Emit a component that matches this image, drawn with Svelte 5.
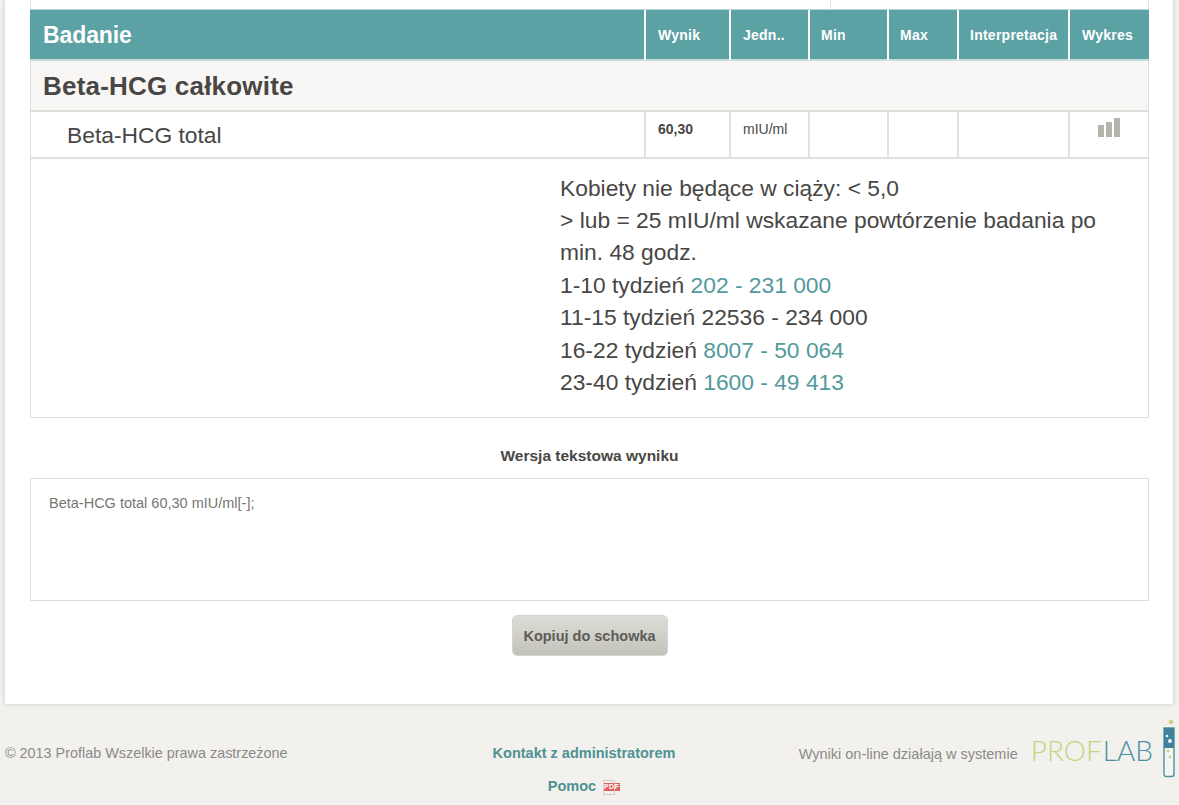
<script>
  const columns = [
    { label: 'Wynik', value: '60,30', bold: true },
    { label: 'Jedn..', value: 'mIU/ml' },
    { label: 'Min', value: '' },
    { label: 'Max', value: '' },
    { label: 'Interpretacja', value: '' }
  ];

  const noteLines = [
    [{ text: 'Kobiety nie będące w ciąży: < 5,0' }],
    [{ text: '> lub = 25 mIU/ml wskazane powtórzenie badania po' }],
    [{ text: 'min. 48 godz.' }],
    [{ text: '1-10 tydzień ' }, { text: '202 - 231 000', link: true }],
    [{ text: '11-15 tydzień 22536 - 234 000' }],
    [{ text: '16-22 tydzień ' }, { text: '8007 - 50 064', link: true }],
    [{ text: '23-40 tydzień ' }, { text: '1600 - 49 413', link: true }]
  ];
</script>

<div class="page">
  <main class="card">
    <div class="stub"><span></span></div>

    <div class="results">
      <div class="row head">
        <div class="cell name">Badanie</div>
        {#each columns as col}
          <div class="cell">{col.label}</div>
        {/each}
        <div class="cell">Wykres</div>
      </div>

      <div class="group">Beta-HCG całkowite</div>

      <div class="row item">
        <div class="cell name">Beta-HCG total</div>
        {#each columns as col}
          <div class="cell" class:bold={col.bold}>{col.value}</div>
        {/each}
        <div class="cell chart">
          <svg width="23" height="20" viewBox="0 0 23 20" aria-hidden="true">
            <rect x="0" y="7" width="6" height="12" fill="#b5b4ab" />
            <rect x="8" y="4" width="6" height="15" fill="#b5b4ab" />
            <rect x="16" y="0" width="6" height="19" fill="#b5b4ab" />
          </svg>
        </div>
      </div>

      <div class="note">
        <div class="note-text">
          {#each noteLines as line}
            <div>
              {#each line as part}
                {#if part.link}<span class="teal">{part.text}</span>{:else}{part.text}{/if}
              {/each}
            </div>
          {/each}
        </div>
      </div>
    </div>

    <h3 class="text-title">Wersja tekstowa wyniku</h3>
    <div class="text-box">Beta-HCG total 60,30 mIU/ml[-];</div>
    <div class="actions">
      <button type="button" class="copy">Kopiuj do schowka</button>
    </div>
  </main>

  <footer class="footer">
    <div class="copyright">© 2013 Proflab Wszelkie prawa zastrzeżone</div>
    <div class="links">
      <a href="#kontakt">Kontakt z administratorem</a>
      <a href="#pomoc" class="help">Pomoc <span class="pdf">PDF</span></a>
    </div>
    <div class="brand">
      <span class="system">Wyniki on-line działają w systemie</span>
      <span class="logo"><span class="prof">PROF</span><span class="lab">LAB</span></span>
      <svg class="tube" width="14" height="62" viewBox="0 0 14 62" aria-hidden="true">
        <circle cx="9" cy="5" r="2.2" fill="#c5d67f" />
        <path d="M2 11 H12 V57 Q12 59.5 9.5 59.5 H4.5 Q2 59.5 2 57 Z" fill="#f5f6f2" stroke="#4d8fa0" stroke-width="1.4" />
        <path d="M2 11 H12 V31 H2 Z" fill="#3f829b" />
        <circle cx="5" cy="19" r="1.3" fill="#fff" />
        <circle cx="8" cy="24" r="1.9" fill="#fff" />
        <circle cx="6" cy="34" r="1.6" fill="#c5d67f" />
        <circle cx="8" cy="40" r="1.4" fill="#c5d67f" />
        <circle cx="6" cy="46" r="1" fill="#dbe4a6" />
      </svg>
    </div>
  </footer>
</div>

<style>
  :global(body) {
    background: #f2f1ee;
    font-family: "Liberation Sans", Arial, sans-serif;
    color: #484745;
  }

  .page {
    height: 805px;
    overflow: hidden;
  }

  .card {
    margin: 0 5px 0 5px;
    width: 1168px;
    height: 704px;
    box-sizing: border-box;
    padding: 0 24px 0 25px;
    background: #fff;
    box-shadow: 0 0 4px rgba(120, 118, 110, 0.35);
  }

  .stub {
    height: 9px;
    border: solid #e3e2de;
    border-width: 0 1px;
  }

  .stub span {
    display: block;
    height: 9px;
    width: 318px;
    margin-left: 799px;
    border-left: 1px solid #e3e2de;
  }

  .row {
    display: grid;
    grid-template-columns: 614px 85px 79px 79px 70px 111px 1fr;
  }

  .cell {
    border-left: 2px solid #e2e1dd;
    box-sizing: border-box;
    padding-left: 12px;
  }

  .cell:first-child {
    border-left: 1px solid #dfdeda;
  }

  .head {
    height: 52px;
    background: #5ca2a5;
    color: #fff;
    font-size: 14px;
    font-weight: bold;
    letter-spacing: 0.25px;
    line-height: 50px;
    border-top: 1px solid #b9d8d9;
    border-bottom: 2px solid #c4dcdc;
    box-sizing: border-box;
  }

  .head .cell {
    border-left-color: #fff;
  }

  .head .cell:nth-child(n + 4):nth-child(-n + 6) {
    padding-left: 11px;
  }

  .head .name {
    font-size: 23px;
    letter-spacing: -0.1px;
    padding-left: 13px;
    border-left: 0;
  }

  .group {
    height: 51px;
    box-sizing: border-box;
    background: #f8f7f5;
    border: solid #dfdeda;
    border-width: 0 1px 2px;
    font-size: 26px;
    letter-spacing: 0.2px;
    font-weight: bold;
    line-height: 51px;
    padding-left: 12px;
  }

  .item {
    height: 47px;
    box-sizing: border-box;
    border-right: 1px solid #dfdeda;
    border-bottom: 2px solid #e2e1dd;
    font-size: 14px;
    line-height: 34px;
  }

  .item .name {
    font-size: 22.8px;
    line-height: 47px;
    padding-left: 36px;
  }

  .bold {
    font-weight: bold;
  }

  .chart {
    padding: 6px 0 0 28px;
    line-height: 0;
  }

  .note {
    height: 259px;
    box-sizing: border-box;
    border: solid #dfdeda;
    border-width: 0 1px 1px;
    padding: 12.6px 0 0 529px;
    font-size: 22.8px;
    line-height: 32.4px;
  }

  .teal {
    color: #529a9b;
  }

  .text-title {
    margin: 29px 0 0;
    text-align: center;
    font-size: 15.5px;
    line-height: 18px;
    font-weight: bold;
  }

  .text-box {
    margin-top: 13px;
    height: 123px;
    box-sizing: border-box;
    border: 1px solid #dfdeda;
    padding: 16px 18px;
    font-size: 14.5px;
    line-height: 16px;
    color: #777672;
  }

  .actions {
    display: flex;
    justify-content: center;
    margin-top: 14px;
  }

  .copy {
    width: 156px;
    height: 41px;
    border: 1px solid #d5d4ce;
    border-radius: 5px;
    background: linear-gradient(#dddcd6, #c3c2ba);
    color: #5d5c56;
    font: bold 14.5px "Liberation Sans", Arial, sans-serif;
  }

  .footer {
    position: relative;
    height: 101px;
  }

  .copyright {
    position: absolute;
    left: 5px;
    top: 40px;
    font-size: 14.4px;
    line-height: 18px;
    color: #8b8a86;
  }

  .links {
    position: absolute;
    left: 0;
    width: 1168px;
    top: 40px;
    display: flex;
    flex-direction: column;
    align-items: center;
    gap: 14px;
  }

  .links a {
    color: #4f9192;
    font-size: 14.5px;
    line-height: 19px;
    font-weight: bold;
    text-decoration: none;
  }

  .pdf {
    display: inline-block;
    position: relative;
    width: 17px;
    margin-left: 3px;
    background: #e0605c;
    color: #fff;
    font-size: 7px;
    line-height: 8px;
    letter-spacing: 0.5px;
    text-align: center;
    vertical-align: 2px;
  }

  .pdf::before {
    content: "";
    position: absolute;
    left: 0;
    top: -3px;
    width: 10px;
    height: 13px;
    border: 1px solid #dcc9c6;
  }

  .brand {
    position: absolute;
    right: 3px;
    top: 18px;
    display: flex;
    align-items: center;
  }

  .system {
    font-size: 14.5px;
    color: #8b8a86;
    margin-right: 13px;
    position: relative;
    top: 3px;
  }

  .logo {
    font-family: Lato, "Liberation Sans", sans-serif;
    font-weight: 300;
    font-size: 28px;
    margin-right: 9px;
    position: relative;
    top: -1px;
  }

  .prof {
    color: #c4d47f;
    margin-right: 1px;
  }

  .lab {
    color: #4d8fa3;
  }

  .tube {
    margin-top: -5px;
  }
</style>
